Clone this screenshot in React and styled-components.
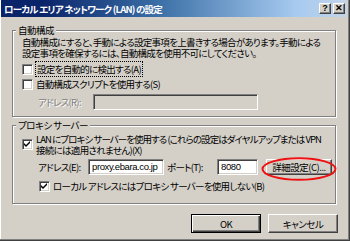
import styled, { createGlobalStyle } from "styled-components";

const GlobalStyle = createGlobalStyle`
  html, body {
    margin: 0;
    padding: 0;
    background: #d4d0c8;
  }
  body {
    font-family: "Noto Sans CJK JP", "Liberation Sans", sans-serif;
    font-size: 9.5px;
    color: #000;
  }
`;

const Window = styled.div`
  width: 350px;
  height: 241px;
  box-sizing: border-box;
  background: #d4d0c8;
  border-right: 1px solid #404040;
  border-bottom: 1px solid #404040;
  box-shadow: inset -1px -1px #808080, inset 1px 0 #fff;
  display: flex;
  flex-direction: column;
  padding: 0 2px 0 1px;
  overflow: hidden;
`;

const TitleBar = styled.div`
  height: 17px;
  display: flex;
  align-items: center;
  padding: 0 2px 0 3px;
  background: linear-gradient(to right, #0a246a 0%, #0a246a 12%, #3a6ea5 45%, #a6caf0 85%, #c4d4e8 100%);
  color: #fff;
  font-weight: bold;
  font-size: 9.5px;
  letter-spacing: -0.8px;
`;

const Title = styled.div`
  flex: 1;
  white-space: nowrap;
  font-feature-settings: "palt";
`;

const CapButton = styled.div`
  width: 12px;
  height: 11px;
  box-sizing: border-box;
  background: #d4d0c8;
  border: 1px solid;
  border-color: #fff #404040 #404040 #fff;
  box-shadow: inset -1px -1px #808080;
  color: #000;
  font-family: "Liberation Sans", sans-serif;
  font-size: 9px;
  font-weight: bold;
  letter-spacing: 0;
  display: flex;
  align-items: center;
  justify-content: center;
  line-height: 1;
  margin-left: ${(p) => (p.$gap ? "2px" : "0")};
`;

const Body = styled.div`
  flex: 1;
  display: flex;
  flex-direction: column;
  padding: 8px 11px 0 11px;
`;

const Group = styled.fieldset`
  margin: 0;
  padding: 0;
  border: 1px solid #808080;
  box-shadow: inset 1px 1px #fff, 1px 1px #fff;
  height: ${(p) => p.$h}px;
  box-sizing: border-box;
  margin-bottom: ${(p) => p.$mb || 0}px;
`;

const Legend = styled.legend`
  margin-left: 3px;
  padding: 0 2px;
  background: #d4d0c8;
  line-height: 11px;
  white-space: nowrap;
  font-feature-settings: "palt";
  letter-spacing: -0.5px;
`;

const Text = styled.div`
  white-space: nowrap;
  line-height: 11px;
  font-feature-settings: "palt";
  letter-spacing: ${(p) => (p.$ls !== undefined ? p.$ls : -0.7)}px;
  color: ${(p) => (p.$disabled ? "#808080" : "#000")};
  text-shadow: ${(p) => (p.$disabled ? "1px 1px #fff" : "none")};
`;

const GroupInner = styled.div`
  display: flex;
  flex-direction: column;
  padding: ${(p) => p.$pad};
`;

const CheckRow = styled.div`
  display: flex;
  align-items: ${(p) => (p.$top ? "flex-start" : "center")};
  margin-top: ${(p) => p.$mt || 0}px;
  margin-left: ${(p) => p.$ml || 0}px;
`;

const Box = styled.span`
  width: 11px;
  height: 11px;
  flex: none;
  box-sizing: border-box;
  background: #fff;
  border: 1px solid;
  border-color: #808080 #fff #fff #808080;
  box-shadow: inset 1px 1px #404040, inset -1px -1px #d4d0c8;
  display: flex;
  align-items: center;
  justify-content: center;
  margin-right: ${(p) => p.$mr || 3}px;
  margin-top: ${(p) => p.$mt || 0}px;
`;

const Focus = styled.span`
  outline: 1px dotted #000;
  outline-offset: 0;
  padding: 0 1px;
`;

const FieldRow = styled.div`
  display: flex;
  align-items: center;
  margin-top: ${(p) => p.$mt || 0}px;
  margin-left: ${(p) => p.$ml || 0}px;
`;

const Label = styled(Text)`
  width: ${(p) => p.$w}px;
  padding-left: ${(p) => p.$pl || 0}px;
  flex: none;
`;

const Input = styled.div`
  width: ${(p) => p.$w}px;
  height: 16px;
  flex: none;
  box-sizing: border-box;
  background: ${(p) => (p.$disabled ? "#d4d0c8" : "#fff")};
  border: 1px solid;
  border-color: #808080 #fff #fff #808080;
  box-shadow: inset 1px 1px #404040, inset -1px -1px #d4d0c8;
  font-family: "Liberation Sans", sans-serif;
  font-size: 9.5px;
  line-height: 14px;
  padding-left: 3px;
  white-space: nowrap;
  overflow: hidden;
  letter-spacing: -0.4px;
`;

const Button = styled.div`
  width: ${(p) => p.$w}px;
  height: ${(p) => p.$h || 17}px;
  flex: none;
  box-sizing: border-box;
  background: #d4d0c8;
  border: 1px solid;
  border-color: ${(p) => (p.$default ? "#000" : "#fff #404040 #404040 #fff")};
  box-shadow: ${(p) =>
    p.$default
      ? "inset 1px 1px #fff, inset -1px -1px #404040, inset -2px -2px #808080"
      : "inset -1px -1px #808080"};
  display: flex;
  align-items: center;
  justify-content: center;
  white-space: nowrap;
  font-feature-settings: "palt";
  letter-spacing: -0.5px;
  line-height: 10px;
`;

const AdvancedWrap = styled.div`
  position: relative;
  margin-left: 8px;
`;

const Ellipse = styled.svg`
  position: absolute;
  left: -5px;
  top: -2px;
  pointer-events: none;
`;

const Footer = styled.div`
  display: flex;
  justify-content: flex-end;
  gap: 7px;
  padding: 10px 0 0 0;
  margin-right: -2px;
`;

function Check() {
  return (
    <svg width="7" height="7" viewBox="0 0 7 7">
      <path d="M0 2 L2 4 L6 0 L6 2 L2 6 L0 4 Z" fill="#000" />
    </svg>
  );
}

export default function App() {
  return (
    <>
      <GlobalStyle />
      <Window>
        <TitleBar>
          <Title>ローカル エリア ネットワーク (LAN) の設定</Title>
          <CapButton>?</CapButton>
          <CapButton $gap>✕</CapButton>
        </TitleBar>
        <Body>
          <Group $h={92} $mb={3}>
            <Legend>自動構成</Legend>
            <GroupInner $pad="1px 0 0 9px">
              <Text>
                自動構成にすると、手動による設定事項を上書きする場合があります。手動による
              </Text>
              <Text>設定事項を確保するには、自動構成を使用不可にしてください。</Text>
              <CheckRow $mt={5}>
                <Box />
                <Text>
                  <Focus>設定を自動的に検出する(A)</Focus>
                </Text>
              </CheckRow>
              <CheckRow $mt={4}>
                <Box />
                <Text>自動構成スクリプトを使用する(S)</Text>
              </CheckRow>
              <FieldRow $mt={4} $ml={16}>
                <Label $w={55} $disabled>
                  アドレス(R):
                </Label>
                <Input $w={165} $disabled />
              </FieldRow>
            </GroupInner>
          </Group>
          <Group $h={84}>
            <Legend>プロキシ サーバー</Legend>
            <GroupInner $pad="3px 0 0 9px">
              <CheckRow $top>
                <Box $mt={5}>
                  <Check />
                </Box>
                <div>
                  <Text $ls={-0.95}>
                    LAN にプロキシ サーバーを使用する (これらの設定はダイヤルアップまたは VPN
                  </Text>
                  <Text>接続には適用されません)(X)</Text>
                </div>
              </CheckRow>
              <FieldRow $mt={3} $ml={16}>
                <Label $w={50}>アドレス(E):</Label>
                <Input $w={76}>proxy.ebara.co.jp</Input>
                <Label $w={50} $pl={3}>
                  ポート(T):
                </Label>
                <Input $w={41}>8080</Input>
                <AdvancedWrap>
                  <Button $w={66} $h={16}>
                    詳細設定(C)...
                  </Button>
                  <Ellipse width="76" height="24" viewBox="0 0 76 24">
                    <ellipse
                      cx="38"
                      cy="12"
                      rx="36.5"
                      ry="10.8"
                      fill="none"
                      stroke="#ee1111"
                      strokeWidth="2"
                    />
                  </Ellipse>
                </AdvancedWrap>
              </FieldRow>
              <CheckRow $mt={6} $ml={17}>
                <Box>
                  <Check />
                </Box>
                <Text>ローカル アドレスにはプロキシ サーバーを使用しない(B)</Text>
              </CheckRow>
            </GroupInner>
          </Group>
          <Footer>
            <Button $w={70} $h={19} $default>
              OK
            </Button>
            <Button $w={70} $h={19}>
              キャンセル
            </Button>
          </Footer>
        </Body>
      </Window>
    </>
  );
}
